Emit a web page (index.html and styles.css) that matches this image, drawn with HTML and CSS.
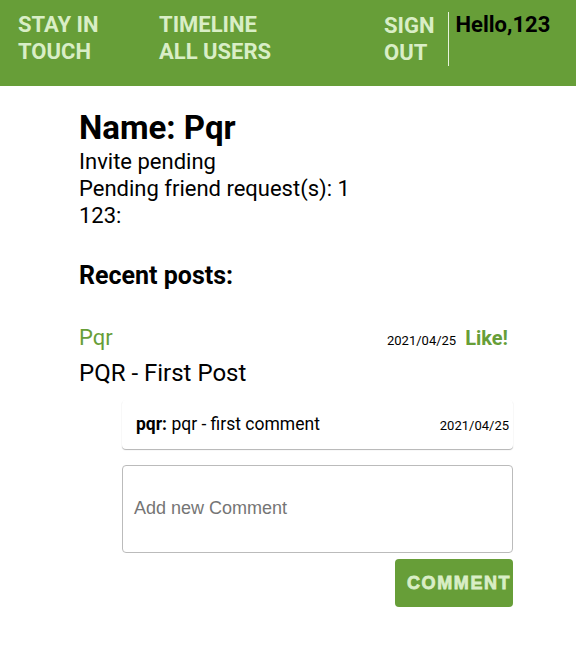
FILE: index.html
```html
<!DOCTYPE html>
<html>
<head>
<meta charset="utf-8">
<link rel="stylesheet" href="styles.css">
</head>
<body>
<header class="topbar">
  <nav class="nav">
    <a class="nav-brand" href="#">STAY IN<br>TOUCH</a>
    <div class="nav-links">
      <a href="#">TIMELINE</a>
      <a href="#">ALL USERS</a>
    </div>
    <a class="nav-signout" href="#">SIGN<br>OUT</a>
    <div class="nav-user">Hello,123</div>
  </nav>
</header>
<main class="content">
  <h1 class="name">Name: Pqr</h1>
  <div class="info">Invite pending</div>
  <div class="info">Pending friend request(s): 1</div>
  <div class="info">123:</div>
  <h2 class="recent">Recent posts:</h2>
  <article class="post">
    <div class="post-head">
      <span class="post-author">Pqr</span>
      <span class="post-meta"><span class="date">2021/04/25</span><a class="like" href="#">Like!</a></span>
    </div>
    <div class="post-body">PQR - First Post</div>
    <div class="comments">
      <div class="comment">
        <span><b>pqr:</b> pqr - first comment</span>
        <span class="date">2021/04/25</span>
      </div>
      <textarea class="comment-input" placeholder="Add new Comment"></textarea>
      <div class="actions"><button class="btn">COMMENT</button></div>
    </div>
  </article>
</main>
</body>
</html>
```
FILE: styles.css
```css
* { box-sizing: border-box; }
body {
  margin: 0;
  font-family: Roboto, "Liberation Sans", sans-serif;
  color: #000;
  background: #fff;
}
a { text-decoration: none; }
.topbar {
  background: #679e38;
  height: 86px;
}
.nav {
  display: flex;
  align-items: flex-start;
  padding: 11px 0 0 18px;
  font-weight: 700;
  font-size: 22px;
  line-height: 27px;
}
.nav a { color: #d9eec6; }
.nav-brand { width: 141px; }
.nav-links { display: flex; flex-direction: column; width: 225px; }
.nav-signout {
  padding-right: 13px;
  border-right: 1px solid #e8f3dd;
  height: 54px;
  margin-top: 1px;
}
.nav-user { color: #000; padding-left: 7px; }
.content {
  padding: 22px 63px 0 79px;
}
.name {
  margin: 0;
  font-size: 33px;
  line-height: 40px;
  font-weight: 700;
}
.info { font-size: 22px; line-height: 27px; }
.recent {
  margin: 32px 0 0;
  font-size: 25px;
  line-height: 30px;
  font-weight: 700;
}
.post { margin-top: 33px; }
.post-head {
  display: flex;
  justify-content: space-between;
  align-items: baseline;
}
.post-author { color: #679e38; font-size: 22px; line-height: 28px; }
.post-meta { display: flex; align-items: baseline; gap: 9px; margin-right: 5px; }
.date { font-size: 13px; }
.like { color: #679e38; font-weight: 700; font-size: 20px; }
.post-body { font-size: 24px; line-height: 32px; margin-top: 5px; }
.comments { margin-left: 43px; margin-top: 11px; }
.comment {
  display: flex;
  justify-content: space-between;
  align-items: baseline;
  padding: 12px 4px 11px 14px;
  font-size: 17.5px;
  line-height: 24px;
  border-radius: 4px;
  box-shadow: 0 1px 1px rgba(0,0,0,0.3);
}
.comment-input {
  display: block;
  width: 100%;
  height: 88px;
  margin-top: 16px;
  border: 1px solid #bbb;
  border-radius: 4px;
  padding: 32px 11px;
  font-family: "Liberation Sans", Arial, sans-serif;
  font-size: 18px;
  resize: none;
}
.comment-input::placeholder { color: #757575; }
.actions { display: flex; justify-content: flex-end; margin-top: 6px; }
.btn {
  width: 118px;
  height: 48px;
  background: #679e38;
  color: #d9eec6;
  border: 0;
  border-radius: 4px;
  font-family: "Liberation Sans", Arial, sans-serif;
  font-weight: 900;
  font-size: 18px;
  letter-spacing: 1.6px;
  padding: 0 0 0 12px;
  text-align: left;
  white-space: nowrap;
  overflow: hidden;
  -webkit-text-stroke: 0.8px #d9eec6;
}
```
